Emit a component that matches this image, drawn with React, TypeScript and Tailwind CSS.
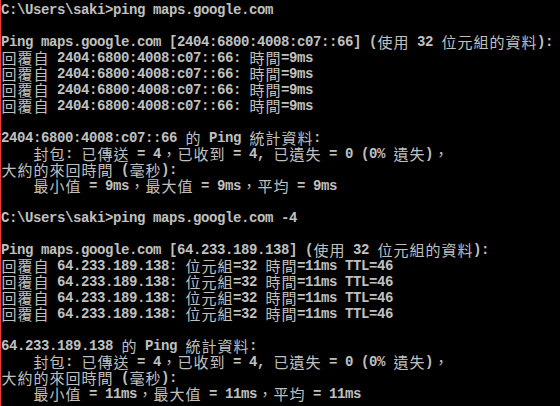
const lines = [
  "C:\\Users\\saki>ping maps.google.com",
  "",
  "Ping maps.google.com [2404:6800:4008:c07::66] (使用 32 位元組的資料):",
  "回覆自 2404:6800:4008:c07::66: 時間=9ms",
  "回覆自 2404:6800:4008:c07::66: 時間=9ms",
  "回覆自 2404:6800:4008:c07::66: 時間=9ms",
  "回覆自 2404:6800:4008:c07::66: 時間=9ms",
  "",
  "2404:6800:4008:c07::66 的 Ping 統計資料:",
  "    封包: 已傳送 = 4，已收到 = 4, 已遺失 = 0 (0% 遺失)，",
  "大約的來回時間 (毫秒):",
  "    最小值 = 9ms，最大值 = 9ms，平均 = 9ms",
  "",
  "C:\\Users\\saki>ping maps.google.com -4",
  "",
  "Ping maps.google.com [64.233.189.138] (使用 32 位元組的資料):",
  "回覆自 64.233.189.138: 位元組=32 時間=11ms TTL=46",
  "回覆自 64.233.189.138: 位元組=32 時間=11ms TTL=46",
  "回覆自 64.233.189.138: 位元組=32 時間=11ms TTL=46",
  "回覆自 64.233.189.138: 位元組=32 時間=11ms TTL=46",
  "",
  "64.233.189.138 的 Ping 統計資料:",
  "    封包: 已傳送 = 4，已收到 = 4, 已遺失 = 0 (0% 遺失)，",
  "大約的來回時間 (毫秒):",
  "    最小值 = 11ms，最大值 = 11ms，平均 = 11ms",
];

// console cells: ascii takes one 8px cell, CJK takes two
const isWide = (ch: string) => ch.charCodeAt(0) > 0x2e80;

function Line({ text }: { text: string }) {
  return (
    <div className="flex h-4 whitespace-pre">
      {Array.from(text).map((ch, i) =>
        isWide(ch) ? (
          <span
            key={i}
            className="inline-block w-4 text-center font-['Noto_Sans_CJK_TC','Noto_Sans_CJK_SC',sans-serif] text-[15px] leading-4"
          >
            {ch}
          </span>
        ) : (
          <span
            key={i}
            className="inline-block w-2 text-center font-['Liberation_Mono',monospace] text-[14px] font-bold leading-4"
          >
            {ch}
          </span>
        )
      )}
    </div>
  );
}

export default function App() {
  return (
    <div className="flex h-[406px] w-[560px] overflow-hidden bg-black">
      <div className="w-px shrink-0 bg-[#ee3a3a]" />
      <div className="flex-1 pt-[2px] text-[#c0c0c0]">
        {lines.map((l, i) => (
          <Line key={i} text={l} />
        ))}
      </div>
    </div>
  );
}
